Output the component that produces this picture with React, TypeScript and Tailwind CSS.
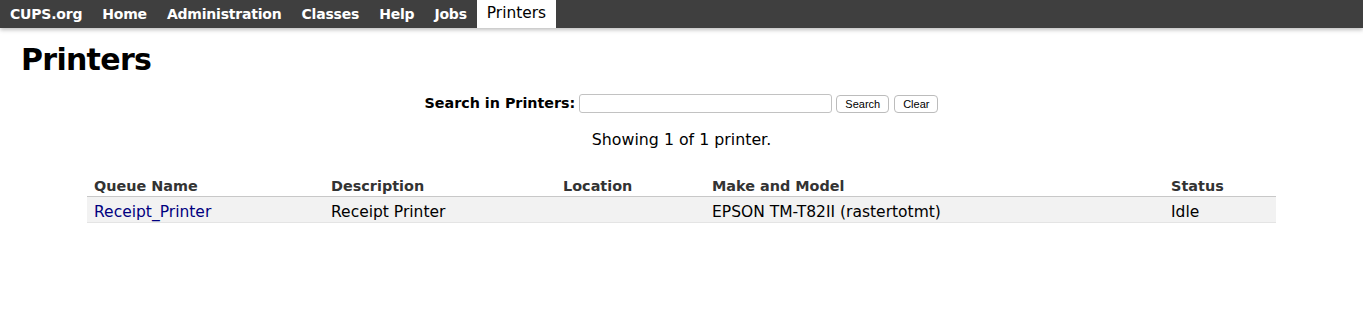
import React from "react";

export default function App() {
  const nav = ["CUPS.org", "Home", "Administration", "Classes", "Help", "Jobs"];
  return (
    <div className="min-h-[322px] bg-white text-black font-['DejaVu_Sans',sans-serif]">
      <div className="flex h-[28px] bg-[#3f3f3f] shadow-[0_2px_4px_rgba(0,0,0,0.25)]">
        {nav.map((n) => (
          <a key={n} className="flex items-center px-[10px] text-[14px] font-bold text-white tracking-[-0.2px]">
            {n}
          </a>
        ))}
        <a className="flex items-center bg-white px-[10px] text-[15.4px] text-black">Printers</a>
      </div>
      <div className="px-[21px]">
        <h1 className="mt-[14px] text-[30px] font-bold leading-[36px] tracking-[-0.7px]">Printers</h1>
        <div className="mt-[16px] flex h-[19px] items-center justify-center gap-[4px]">
          <span className="text-[14.3px] font-bold">Search in Printers:</span>
          <input className="h-[19px] w-[253px] rounded-[3px] border border-[#c2c2c2] bg-white" />
          <button className="h-[18px] rounded-[4px] border border-[#bcbcbc] bg-white px-[8px] text-[11px] leading-[16px] font-['Liberation_Sans',sans-serif]">
            Search
          </button>
          <button className="ml-[1px] h-[18px] rounded-[4px] border border-[#bcbcbc] bg-white px-[8px] text-[11px] leading-[16px] font-['Liberation_Sans',sans-serif]">
            Clear
          </button>
        </div>
        <p className="mt-[17px] text-center text-[15.8px] leading-[20px]">Showing 1 of 1 printer.</p>
        <table className="mx-auto mt-[26px] w-[90%] border-collapse">
          <thead>
            <tr className="h-[20px] text-left text-[14.4px] leading-[18px]">
              <th className="pl-[7px] pt-0 pb-[1px] align-bottom font-bold text-[#333] w-[237px]">Queue Name</th>
              <th className="pl-[7px] pt-0 pb-[1px] align-bottom font-bold text-[#333] w-[232px]">Description</th>
              <th className="pl-[7px] pt-0 pb-[1px] align-bottom font-bold text-[#333] w-[149px]">Location</th>
              <th className="pl-[7px] pt-0 pb-[1px] align-bottom font-bold text-[#333] w-[459px]">Make and Model</th>
              <th className="pl-[7px] pt-0 pb-[1px] align-bottom font-bold text-[#333]">Status</th>
            </tr>
          </thead>
          <tbody>
            <tr className="h-[26px] border-t border-[#c8c8c8] border-b border-b-[#e4e4e4] bg-[#f2f2f2] text-[15.5px] leading-[20px]">
              <td className="pl-[7px] pt-[5px] pb-0 align-top"><a className="text-[#000080]">Receipt_Printer</a></td>
              <td className="pl-[7px] pt-[5px] pb-0 align-top">Receipt Printer</td>
              <td className="pl-[7px] pt-[5px] pb-0 align-top"></td>
              <td className="pl-[7px] pt-[5px] pb-0 align-top">EPSON TM-T82II (rastertotmt)</td>
              <td className="pl-[7px] pt-[5px] pb-0 align-top">Idle</td>
            </tr>
          </tbody>
        </table>
      </div>
    </div>
  );
}
